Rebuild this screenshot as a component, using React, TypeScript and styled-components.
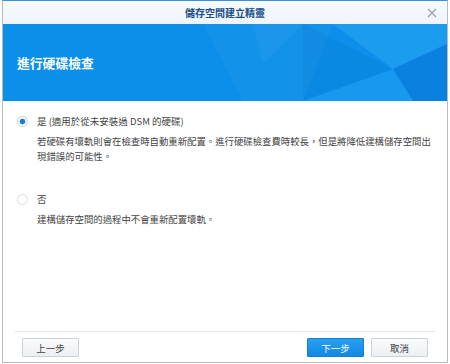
import styled, { createGlobalStyle } from "styled-components";

const GlobalStyle = createGlobalStyle`
  html, body {
    margin: 0;
    padding: 0;
    background: #ffffff;
  }
  body {
    font-family: "Noto Sans CJK TC", "Noto Sans", "Liberation Sans", sans-serif;
    color: #404040;
  }
`;

const options = [
  {
    id: "yes",
    label: "是 (適用於從未安裝過 DSM 的硬碟)",
    desc: "若硬碟有壞軌則會在檢查時自動重新配置。進行硬碟檢查費時較長，但是將降低建構儲存空間出現錯誤的可能性。",
    checked: true,
  },
  {
    id: "no",
    label: "否",
    desc: "建構儲存空間的過程中不會重新配置壞軌。",
    checked: false,
  },
];

export default function App() {
  return (
    <>
      <GlobalStyle />
      <Window>
        <TitleBar>
          <TitleText>儲存空間建立精靈</TitleText>
          <CloseButton aria-label="close">
            <svg width="10" height="10" viewBox="0 0 10 10">
              <path d="M1 1 L9 9 M9 1 L1 9" stroke="#9aa0a8" strokeWidth="1.1" fill="none" />
            </svg>
          </CloseButton>
        </TitleBar>

        <Banner>
          <BannerArt viewBox="0 0 444 77" preserveAspectRatio="none">
            <polygon points="200,0 330,0 300,77 240,77" fill="#ffffff" opacity="0.035" />
            <polygon points="330,0 444,0 444,20 390,45" fill="#5fd0ff" opacity="0.2" />
            <polygon points="300,0 390,45 300,77" fill="#000a40" opacity="0.04" />
            <polygon points="390,45 444,20 444,77 410,77" fill="#0a5fc8" opacity="0.3" />
            <polygon points="300,77 390,45 410,77" fill="#3ab8ff" opacity="0.25" />
            <polygon points="250,0 300,0 260,40" fill="#ffffff" opacity="0.04" />
          </BannerArt>
          <BannerTitle>進行硬碟檢查</BannerTitle>
        </Banner>

        <Content>
          {options.map((opt) => (
            <Option key={opt.id}>
              <OptionRow>
                <Radio $checked={opt.checked} />
                <OptionLabel>{opt.label}</OptionLabel>
              </OptionRow>
              <OptionDesc>{opt.desc}</OptionDesc>
            </Option>
          ))}
        </Content>

        <Footer>
          <Button>上一步</Button>
          <FooterRight>
            <Button $primary>下一步</Button>
            <Button>取消</Button>
          </FooterRight>
        </Footer>
      </Window>
    </>
  );
}

const Window = styled.div`
  box-sizing: border-box;
  margin-left: 2px;
  width: 446px;
  height: 363px;
  display: flex;
  flex-direction: column;
  border: 1px solid #b4bcc6;
  border-top-color: #3d8fd6;
  background: #ffffff;
`;

const TitleBar = styled.div`
  position: relative;
  height: 23px;
  display: flex;
  align-items: center;
  justify-content: center;
  background: linear-gradient(#f8fbfd, #eef4f9);
`;

const TitleText = styled.span`
  font-size: 10px;
  font-weight: 700;
  color: #17508a;
`;

const CloseButton = styled.span`
  position: absolute;
  right: 10px;
  top: 7px;
  display: flex;
`;

const Banner = styled.div`
  position: relative;
  height: 77px;
  display: flex;
  align-items: center;
  padding-left: 14px;
  background: #0b8fea;
  overflow: hidden;
`;

const BannerArt = styled.svg`
  position: absolute;
  inset: 0;
  width: 100%;
  height: 100%;
`;

const BannerTitle = styled.h1`
  position: relative;
  margin: 0;
  font-size: 12.8px;
  font-weight: 700;
  color: #ffffff;
`;

const Content = styled.div`
  flex: 1;
  display: flex;
  flex-direction: column;
  gap: 28px;
  padding: 13px 10px 0 14px;
`;

const Option = styled.div`
  display: flex;
  flex-direction: column;
  gap: 6px;
`;

const OptionRow = styled.div`
  display: flex;
  align-items: center;
  gap: 9px;
  height: 14px;
`;

const Radio = styled.span<{ $checked: boolean }>`
  box-sizing: border-box;
  width: 11px;
  height: 11px;
  border-radius: 50%;
  border: 1px solid ${({ $checked }) => ($checked ? "#c8ced6" : "#d8dde2")};
  background: ${({ $checked }) =>
    $checked ? "radial-gradient(circle, #1a7fdc 0 2.6px, #ffffff 3.2px)" : "#ffffff"};
  flex-shrink: 0;
`;

const OptionLabel = styled.span`
  font-size: 9.5px;
  color: #444444;
`;

const OptionDesc = styled.p`
  margin: 0;
  padding-left: 20px;
  font-size: 9.4px;
  line-height: 15px;
  color: #444444;
`;

const Footer = styled.div`
  display: flex;
  justify-content: space-between;
  align-items: center;
  margin: 0 12px;
  padding: 6px 7px 5px;
  border-top: 1px solid #e3e6e9;
`;

const FooterRight = styled.div`
  display: flex;
  gap: 7px;
`;

const Button = styled.button<{ $primary?: boolean }>`
  box-sizing: border-box;
  width: 57px;
  height: 19px;
  padding: 0;
  font-family: inherit;
  font-size: 9.5px;
  border-radius: 1px;
  border: 1px solid ${({ $primary }) => ($primary ? "#1580d0" : "#cdd2d7")};
  background: ${({ $primary }) =>
    $primary ? "linear-gradient(#2aa0f0, #1288e4)" : "linear-gradient(#fafbfc, #eceff2)"};
  color: ${({ $primary }) => ($primary ? "#ffffff" : "#404040")};
`;
